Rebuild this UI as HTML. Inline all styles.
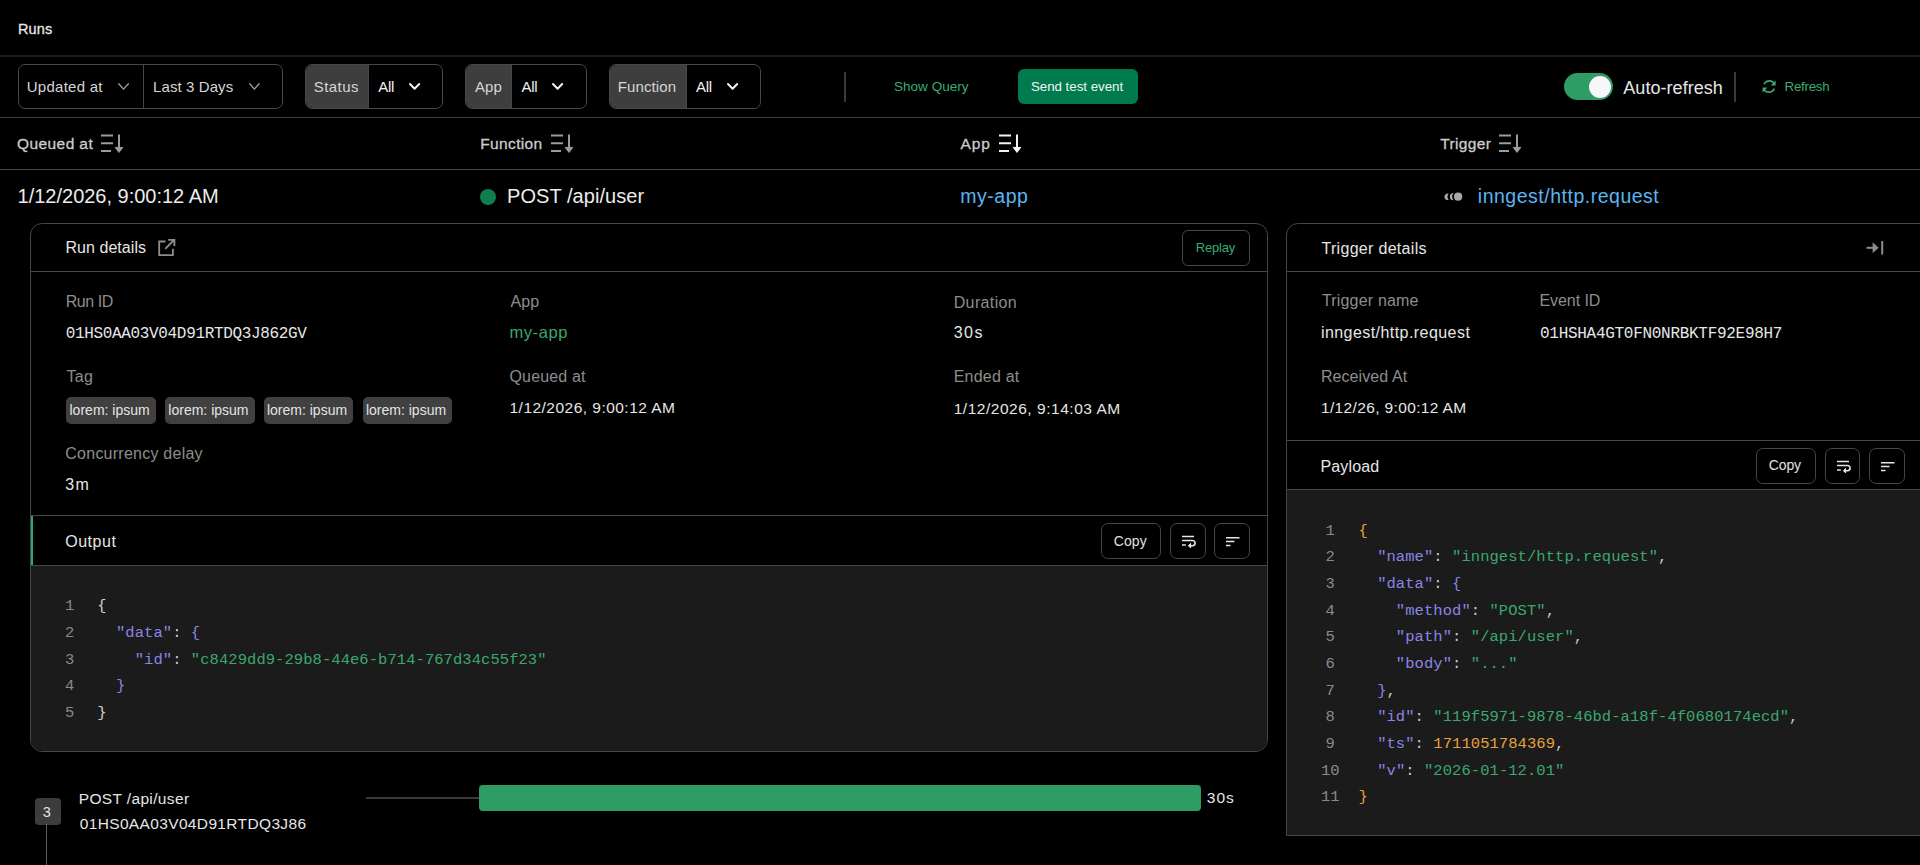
<!DOCTYPE html>
<html><head><meta charset="utf-8"><title>Runs</title>
<style>
html,body{margin:0;padding:0;background:#000;width:1920px;height:865px;overflow:hidden;}
.a{position:absolute;}
.t{position:absolute;white-space:pre;}
.S{font-family:"Liberation Sans",sans-serif;}
.M{font-family:"Liberation Mono",monospace;}
</style></head><body>
<div class="a" style="left:0px;top:55px;width:1920px;height:2px;background:#1d1d1d"></div>
<div class="a" style="left:0px;top:117px;width:1920px;height:1px;background:#404040"></div>
<div class="a" style="left:0px;top:169px;width:1920px;height:1px;background:#464646"></div>
<div class="a" style="left:18px;top:64px;width:265px;height:45px;border:1px solid #474747;border-radius:7px;box-sizing:border-box"></div>
<div class="a" style="left:143px;top:64px;width:1px;height:45px;background:#474747"></div>
<div class="a" style="left:305px;top:64px;width:138px;height:45px;border:1px solid #474747;border-radius:7px;box-sizing:border-box;overflow:hidden"></div>
<div class="a" style="left:306px;top:65px;width:62px;height:43px;background:#3e3e3e;border-radius:6px 0 0 6px"></div>
<div class="a" style="left:368px;top:65px;width:1px;height:43px;background:#474747"></div>
<div class="a" style="left:465px;top:64px;width:122px;height:45px;border:1px solid #474747;border-radius:7px;box-sizing:border-box;overflow:hidden"></div>
<div class="a" style="left:466px;top:65px;width:45px;height:43px;background:#3e3e3e;border-radius:6px 0 0 6px"></div>
<div class="a" style="left:511px;top:65px;width:1px;height:43px;background:#474747"></div>
<div class="a" style="left:609px;top:64px;width:152px;height:45px;border:1px solid #474747;border-radius:7px;box-sizing:border-box;overflow:hidden"></div>
<div class="a" style="left:610px;top:65px;width:76px;height:43px;background:#3e3e3e;border-radius:6px 0 0 6px"></div>
<div class="a" style="left:686px;top:65px;width:1px;height:43px;background:#474747"></div>
<svg class="a" style="left:117.9px;top:83.2px;overflow:visible" width="11.099999999999994" height="6.799999999999997"><polyline points="0.7,0.7 5.549999999999997,6.099999999999997 10.399999999999995,0.7" fill="none" stroke="#9a9a9a" stroke-width="1.4" stroke-linecap="round" stroke-linejoin="round"/></svg>
<svg class="a" style="left:249.3px;top:83.2px;overflow:visible" width="10.800000000000011" height="6.799999999999997"><polyline points="0.7,0.7 5.400000000000006,6.099999999999997 10.100000000000012,0.7" fill="none" stroke="#9a9a9a" stroke-width="1.4" stroke-linecap="round" stroke-linejoin="round"/></svg>
<svg class="a" style="left:408.9px;top:83.2px;overflow:visible" width="11.199999999999989" height="6.700000000000003"><polyline points="1.0,1.0 5.599999999999994,5.700000000000003 10.199999999999989,1.0" fill="none" stroke="#f2f2f2" stroke-width="2" stroke-linecap="round" stroke-linejoin="round"/></svg>
<svg class="a" style="left:552.3px;top:83.2px;overflow:visible" width="11.200000000000045" height="6.700000000000003"><polyline points="1.0,1.0 5.600000000000023,5.700000000000003 10.200000000000045,1.0" fill="none" stroke="#f2f2f2" stroke-width="2" stroke-linecap="round" stroke-linejoin="round"/></svg>
<svg class="a" style="left:726.8px;top:83.2px;overflow:visible" width="11.200000000000045" height="6.700000000000003"><polyline points="1.0,1.0 5.600000000000023,5.700000000000003 10.200000000000045,1.0" fill="none" stroke="#f2f2f2" stroke-width="2" stroke-linecap="round" stroke-linejoin="round"/></svg>
<div class="a" style="left:844px;top:72px;width:2px;height:30px;background:#3a3a3a"></div>
<div class="a" style="left:1734px;top:72px;width:2px;height:30px;background:#3a3a3a"></div>
<div class="a" style="left:1018px;top:69px;width:120px;height:35px;background:#007b4d;border-radius:6px"></div>
<div class="a" style="left:1564px;top:73px;width:49px;height:27px;background:#2e9c64;border-radius:14px"></div>
<div class="a" style="left:1589px;top:76px;width:22px;height:22px;background:#f8f6f8;border-radius:50%"></div>
<svg class="a" style="left:1761px;top:79px" width="17" height="15"><path d="M13.6 5.2A5.8 5.8 0 0 0 3.1 5.2M2.6 9.6A5.8 5.8 0 0 0 13.3 9.6" fill="none" stroke="#39ad71" stroke-width="1.6"/><path d="M14.6 1.6V6.6H9.8Z M1.6 13.6V8.6H6.4Z" fill="#39ad71"/></svg>
<svg class="a" style="left:100px;top:133px" width="26" height="22"><path d="M1 2.5H13M1 10.3H13M1 18.1H11" stroke="#9c9c9c" stroke-width="2" stroke-linecap="butt"/><path d="M19 1.5V17" stroke="#9c9c9c" stroke-width="2"/><path d="M15.2 14.4L19 19.4L22.8 14.4Z" fill="#9c9c9c" stroke="#9c9c9c" stroke-width="1" stroke-linejoin="round"/></svg>
<svg class="a" style="left:550px;top:133px" width="26" height="22"><path d="M1 2.5H13M1 10.3H13M1 18.1H11" stroke="#9c9c9c" stroke-width="2" stroke-linecap="butt"/><path d="M19 1.5V17" stroke="#9c9c9c" stroke-width="2"/><path d="M15.2 14.4L19 19.4L22.8 14.4Z" fill="#9c9c9c" stroke="#9c9c9c" stroke-width="1" stroke-linejoin="round"/></svg>
<svg class="a" style="left:998px;top:133px" width="26" height="22"><path d="M1 2.5H13M1 10.3H13M1 18.1H11" stroke="#f4f4f4" stroke-width="2" stroke-linecap="butt"/><path d="M19 1.5V17" stroke="#f4f4f4" stroke-width="2"/><path d="M15.2 14.4L19 19.4L22.8 14.4Z" fill="#f4f4f4" stroke="#f4f4f4" stroke-width="1" stroke-linejoin="round"/></svg>
<svg class="a" style="left:1498px;top:133px" width="26" height="22"><path d="M1 2.5H13M1 10.3H13M1 18.1H11" stroke="#9c9c9c" stroke-width="2" stroke-linecap="butt"/><path d="M19 1.5V17" stroke="#9c9c9c" stroke-width="2"/><path d="M15.2 14.4L19 19.4L22.8 14.4Z" fill="#9c9c9c" stroke="#9c9c9c" stroke-width="1" stroke-linejoin="round"/></svg>
<div class="a" style="left:480px;top:189px;width:16px;height:16px;background:#0e7f4c;border-radius:50%"></div>
<svg class="a" style="left:1443px;top:191px" width="21" height="12"><circle cx="15.1" cy="5.7" r="4.1" fill="#a8a8a8"/><path d="M10.5 2.1A3.6 3.6 0 1 0 10.5 9.3A6 6 0 0 1 10.5 2.1Z" fill="#adadad"/><path d="M5.7 2.8A3.2 3.2 0 1 0 5.7 8.8A4.6 4.6 0 0 1 5.7 2.8Z" fill="#adadad"/></svg>
<div class="a" style="left:30px;top:223px;width:1238px;height:529px;border:1px solid #454545;border-radius:12px;box-sizing:border-box"></div>
<div class="a" style="left:31px;top:271px;width:1236px;height:1px;background:#454545"></div>
<svg class="a" style="left:157px;top:238px" width="20" height="19"><path d="M8.5 3.5H2.2V17.2H15.9V10.8" fill="none" stroke="#8d8d8d" stroke-width="1.8"/><path d="M8.2 10.8L17 2M11.2 1.8H17.4V8" fill="none" stroke="#8d8d8d" stroke-width="1.8"/></svg>
<div class="a" style="left:1182px;top:230px;width:68px;height:36px;border:1px solid #454545;border-radius:6px;box-sizing:border-box"></div>
<div class="a" style="left:66px;top:397px;width:89.5px;height:26.5px;background:#404040;border-radius:5px"></div>
<div class="a" style="left:165px;top:397px;width:89.5px;height:26.5px;background:#404040;border-radius:5px"></div>
<div class="a" style="left:263.5px;top:397px;width:89.5px;height:26.5px;background:#404040;border-radius:5px"></div>
<div class="a" style="left:362.5px;top:397px;width:89.5px;height:26.5px;background:#404040;border-radius:5px"></div>
<div class="a" style="left:31px;top:515px;width:1236px;height:1px;background:#454545"></div>
<div class="a" style="left:31px;top:516px;width:2px;height:49px;background:#2aa86b"></div>
<div class="a" style="left:31px;top:565px;width:1236px;height:1px;background:#454545"></div>
<div class="a" style="left:31px;top:566px;width:1236px;height:185px;background:#1b1b1b;border-radius:0 0 11px 11px"></div>
<div class="a" style="left:1101px;top:523px;width:60px;height:36px;border:1px solid #454545;border-radius:7px;box-sizing:border-box"></div>
<div class="a" style="left:1170px;top:523px;width:36px;height:36px;border:1px solid #454545;border-radius:7px;box-sizing:border-box"></div>
<div class="a" style="left:1214px;top:523px;width:36px;height:36px;border:1px solid #454545;border-radius:7px;box-sizing:border-box"></div>
<svg class="a" style="left:1181px;top:535px" width="16" height="14"><path d="M1 1.5H13M1 5.5H11.5a2.6 2.6 0 0 1 0 5.2H8.5M1 10H4.8" fill="none" stroke="#e6e6e6" stroke-width="1.6"/><path d="M9.6 8.4L7.4 10.7L9.6 12.9Z" fill="#e6e6e6" stroke="#e6e6e6" stroke-width="1"/></svg>
<svg class="a" style="left:1225px;top:536px" width="16" height="12"><path d="M1 1.8H14.5M1 5.5H9.5M1 9.5H5.5" fill="none" stroke="#e6e6e6" stroke-width="1.6"/></svg>
<div class="a" style="left:1286px;top:223px;width:654px;height:613px;border:1px solid #454545;border-radius:12px 0 0 0;box-sizing:border-box"></div>
<div class="a" style="left:1287px;top:271px;width:633px;height:1px;background:#454545"></div>
<svg class="a" style="left:1865px;top:240px" width="21" height="16"><path d="M1.5 7.8H9" stroke="#8d8d8d" stroke-width="2"/><path d="M7.6 2.3L13.6 7.8L7.6 13.3Z" fill="#8d8d8d"/><path d="M17.2 1V14.6" stroke="#8d8d8d" stroke-width="2"/></svg>
<div class="a" style="left:1287px;top:440px;width:633px;height:1px;background:#454545"></div>
<div class="a" style="left:1287px;top:489px;width:633px;height:1px;background:#454545"></div>
<div class="a" style="left:1287px;top:490px;width:633px;height:345px;background:#1b1b1b"></div>
<div class="a" style="left:1756px;top:448px;width:60px;height:36px;border:1px solid #454545;border-radius:7px;box-sizing:border-box"></div>
<div class="a" style="left:1825px;top:448px;width:35px;height:36px;border:1px solid #454545;border-radius:7px;box-sizing:border-box"></div>
<div class="a" style="left:1869px;top:448px;width:36px;height:36px;border:1px solid #454545;border-radius:7px;box-sizing:border-box"></div>
<svg class="a" style="left:1836px;top:460px" width="16" height="14"><path d="M1 1.5H13M1 5.5H11.5a2.6 2.6 0 0 1 0 5.2H8.5M1 10H4.8" fill="none" stroke="#e6e6e6" stroke-width="1.6"/><path d="M9.6 8.4L7.4 10.7L9.6 12.9Z" fill="#e6e6e6" stroke="#e6e6e6" stroke-width="1"/></svg>
<svg class="a" style="left:1880px;top:461px" width="16" height="12"><path d="M1 1.8H14.5M1 5.5H9.5M1 9.5H5.5" fill="none" stroke="#e6e6e6" stroke-width="1.6"/></svg>
<div class="a" style="left:34.5px;top:798px;width:26.5px;height:26.5px;background:#3c3c3c;border-radius:4px"></div>
<div class="a" style="left:46px;top:824px;width:1px;height:41px;background:#5e5e5e"></div>
<div class="a" style="left:365.5px;top:797px;width:113.5px;height:1.5px;background:#3a3a3a"></div>
<div class="a" style="left:479px;top:784.5px;width:722px;height:26.5px;background:#2d9c63;border-radius:4px"></div>
<div class="t M" style="left:39.8px;width:60px;text-align:center;top:599.30px;font-size:15.5px;line-height:15.5px;letter-spacing:0.06px;color:#8a8a8a">1</div>
<div class="t M" style="left:97.2px;top:599.30px;font-size:15.5px;line-height:15.5px;letter-spacing:0.06px"><span style="color:#d0d0d0">{</span></div>
<div class="t M" style="left:39.8px;width:60px;text-align:center;top:625.97px;font-size:15.5px;line-height:15.5px;letter-spacing:0.06px;color:#8a8a8a">2</div>
<div class="t M" style="left:97.2px;top:625.97px;font-size:15.5px;line-height:15.5px;letter-spacing:0.06px">  <span style="color:#8a84e8">"</span><span style="color:#8a84e8">data</span><span style="color:#8a84e8">"</span><span style="color:#c6c6c6">: </span><span style="color:#8a84e8">{</span></div>
<div class="t M" style="left:39.8px;width:60px;text-align:center;top:652.64px;font-size:15.5px;line-height:15.5px;letter-spacing:0.06px;color:#8a8a8a">3</div>
<div class="t M" style="left:97.2px;top:652.64px;font-size:15.5px;line-height:15.5px;letter-spacing:0.06px">    <span style="color:#8a84e8">"</span><span style="color:#8a84e8">id</span><span style="color:#8a84e8">"</span><span style="color:#c6c6c6">: </span><span style="color:#3aa86e">"c8429dd9-29b8-44e6-b714-767d34c55f23"</span></div>
<div class="t M" style="left:39.8px;width:60px;text-align:center;top:679.31px;font-size:15.5px;line-height:15.5px;letter-spacing:0.06px;color:#8a8a8a">4</div>
<div class="t M" style="left:97.2px;top:679.31px;font-size:15.5px;line-height:15.5px;letter-spacing:0.06px">  <span style="color:#8a84e8">}</span></div>
<div class="t M" style="left:39.8px;width:60px;text-align:center;top:705.98px;font-size:15.5px;line-height:15.5px;letter-spacing:0.06px;color:#8a8a8a">5</div>
<div class="t M" style="left:97.2px;top:705.98px;font-size:15.5px;line-height:15.5px;letter-spacing:0.06px"><span style="color:#d0d0d0">}</span></div>
<div class="t M" style="left:1300.3px;width:60px;text-align:center;top:523.60px;font-size:15.5px;line-height:15.5px;letter-spacing:0.06px;color:#8a8a8a">1</div>
<div class="t M" style="left:1358.4px;top:523.60px;font-size:15.5px;line-height:15.5px;letter-spacing:0.06px"><span style="color:#e6a23c">{</span></div>
<div class="t M" style="left:1300.3px;width:60px;text-align:center;top:550.27px;font-size:15.5px;line-height:15.5px;letter-spacing:0.06px;color:#8a8a8a">2</div>
<div class="t M" style="left:1358.4px;top:550.27px;font-size:15.5px;line-height:15.5px;letter-spacing:0.06px">  <span style="color:#8a84e8">"</span><span style="color:#8a84e8">name</span><span style="color:#8a84e8">"</span><span style="color:#c6c6c6">: </span><span style="color:#3aa86e">"inngest/http.request"</span><span style="color:#c6c6c6">,</span></div>
<div class="t M" style="left:1300.3px;width:60px;text-align:center;top:576.94px;font-size:15.5px;line-height:15.5px;letter-spacing:0.06px;color:#8a8a8a">3</div>
<div class="t M" style="left:1358.4px;top:576.94px;font-size:15.5px;line-height:15.5px;letter-spacing:0.06px">  <span style="color:#8a84e8">"</span><span style="color:#8a84e8">data</span><span style="color:#8a84e8">"</span><span style="color:#c6c6c6">: </span><span style="color:#8a84e8">{</span></div>
<div class="t M" style="left:1300.3px;width:60px;text-align:center;top:603.61px;font-size:15.5px;line-height:15.5px;letter-spacing:0.06px;color:#8a8a8a">4</div>
<div class="t M" style="left:1358.4px;top:603.61px;font-size:15.5px;line-height:15.5px;letter-spacing:0.06px">    <span style="color:#8a84e8">"</span><span style="color:#8a84e8">method</span><span style="color:#8a84e8">"</span><span style="color:#c6c6c6">: </span><span style="color:#3aa86e">"POST"</span><span style="color:#c6c6c6">,</span></div>
<div class="t M" style="left:1300.3px;width:60px;text-align:center;top:630.28px;font-size:15.5px;line-height:15.5px;letter-spacing:0.06px;color:#8a8a8a">5</div>
<div class="t M" style="left:1358.4px;top:630.28px;font-size:15.5px;line-height:15.5px;letter-spacing:0.06px">    <span style="color:#8a84e8">"</span><span style="color:#8a84e8">path</span><span style="color:#8a84e8">"</span><span style="color:#c6c6c6">: </span><span style="color:#3aa86e">"/api/user"</span><span style="color:#c6c6c6">,</span></div>
<div class="t M" style="left:1300.3px;width:60px;text-align:center;top:656.95px;font-size:15.5px;line-height:15.5px;letter-spacing:0.06px;color:#8a8a8a">6</div>
<div class="t M" style="left:1358.4px;top:656.95px;font-size:15.5px;line-height:15.5px;letter-spacing:0.06px">    <span style="color:#8a84e8">"</span><span style="color:#8a84e8">body</span><span style="color:#8a84e8">"</span><span style="color:#c6c6c6">: </span><span style="color:#3aa86e">"..."</span></div>
<div class="t M" style="left:1300.3px;width:60px;text-align:center;top:683.62px;font-size:15.5px;line-height:15.5px;letter-spacing:0.06px;color:#8a8a8a">7</div>
<div class="t M" style="left:1358.4px;top:683.62px;font-size:15.5px;line-height:15.5px;letter-spacing:0.06px">  <span style="color:#8a84e8">}</span><span style="color:#c6c6c6">,</span></div>
<div class="t M" style="left:1300.3px;width:60px;text-align:center;top:710.29px;font-size:15.5px;line-height:15.5px;letter-spacing:0.06px;color:#8a8a8a">8</div>
<div class="t M" style="left:1358.4px;top:710.29px;font-size:15.5px;line-height:15.5px;letter-spacing:0.06px">  <span style="color:#8a84e8">"</span><span style="color:#8a84e8">id</span><span style="color:#8a84e8">"</span><span style="color:#c6c6c6">: </span><span style="color:#3aa86e">"119f5971-9878-46bd-a18f-4f0680174ecd"</span><span style="color:#c6c6c6">,</span></div>
<div class="t M" style="left:1300.3px;width:60px;text-align:center;top:736.96px;font-size:15.5px;line-height:15.5px;letter-spacing:0.06px;color:#8a8a8a">9</div>
<div class="t M" style="left:1358.4px;top:736.96px;font-size:15.5px;line-height:15.5px;letter-spacing:0.06px">  <span style="color:#8a84e8">"</span><span style="color:#8a84e8">ts</span><span style="color:#8a84e8">"</span><span style="color:#c6c6c6">: </span><span style="color:#e6a23c">1711051784369</span><span style="color:#c6c6c6">,</span></div>
<div class="t M" style="left:1300.3px;width:60px;text-align:center;top:763.63px;font-size:15.5px;line-height:15.5px;letter-spacing:0.06px;color:#8a8a8a">10</div>
<div class="t M" style="left:1358.4px;top:763.63px;font-size:15.5px;line-height:15.5px;letter-spacing:0.06px">  <span style="color:#8a84e8">"</span><span style="color:#8a84e8">v</span><span style="color:#8a84e8">"</span><span style="color:#c6c6c6">: </span><span style="color:#3aa86e">"2026-01-12.01"</span></div>
<div class="t M" style="left:1300.3px;width:60px;text-align:center;top:790.30px;font-size:15.5px;line-height:15.5px;letter-spacing:0.06px;color:#8a8a8a">11</div>
<div class="t M" style="left:1358.4px;top:790.30px;font-size:15.5px;line-height:15.5px;letter-spacing:0.06px"><span style="color:#e6a23c">}</span></div>
<div class="t S" style="left:17.90px;top:21.50px;font-size:14.5px;line-height:14.5px;letter-spacing:0.133px;color:#e6e6e6;-webkit-text-stroke:0.3px #e6e6e6">Runs</div>
<div class="t S" style="left:26.80px;top:79.30px;font-size:15.0px;line-height:15.0px;letter-spacing:0.244px;color:#d6d6d6">Updated at</div>
<div class="t S" style="left:153.10px;top:79.20px;font-size:15.0px;line-height:15.0px;letter-spacing:0.090px;color:#d6d6d6">Last 3 Days</div>
<div class="t S" style="left:313.80px;top:78.90px;font-size:15.0px;line-height:15.0px;letter-spacing:0.420px;color:#d6d6d6">Status</div>
<div class="t S" style="left:378.30px;top:78.90px;font-size:15.0px;line-height:15.0px;letter-spacing:-0.350px;color:#f2f2f2">All</div>
<div class="t S" style="left:475.00px;top:79.10px;font-size:15.0px;line-height:15.0px;letter-spacing:0.100px;color:#d6d6d6">App</div>
<div class="t S" style="left:521.60px;top:79.10px;font-size:15.0px;line-height:15.0px;letter-spacing:-0.300px;color:#f2f2f2">All</div>
<div class="t S" style="left:617.70px;top:79.10px;font-size:15.0px;line-height:15.0px;letter-spacing:0.129px;color:#d6d6d6">Function</div>
<div class="t S" style="left:696.10px;top:79.10px;font-size:15.0px;line-height:15.0px;letter-spacing:-0.400px;color:#f2f2f2">All</div>
<div class="t S" style="left:893.90px;top:79.90px;font-size:13.5px;line-height:13.5px;letter-spacing:0.044px;color:#39ad71">Show Query</div>
<div class="t S" style="left:1030.90px;top:79.90px;font-size:13.3px;line-height:13.3px;letter-spacing:-0.007px;color:#f4f4f4">Send test event</div>
<div class="t S" style="left:1623.30px;top:78.50px;font-size:18.0px;line-height:18.0px;letter-spacing:0.045px;color:#e6e6e6">Auto-refresh</div>
<div class="t S" style="left:1784.60px;top:80.00px;font-size:13.3px;line-height:13.3px;letter-spacing:-0.267px;color:#39ad71">Refresh</div>
<div class="t S" style="left:17.10px;top:135.70px;font-size:15.5px;line-height:15.5px;letter-spacing:0.400px;color:#cccccc;-webkit-text-stroke:0.3px #cccccc">Queued at</div>
<div class="t S" style="left:480.20px;top:135.70px;font-size:15.5px;line-height:15.5px;letter-spacing:0.371px;color:#cccccc;-webkit-text-stroke:0.3px #cccccc">Function</div>
<div class="t S" style="left:960.50px;top:135.70px;font-size:15.5px;line-height:15.5px;letter-spacing:0.900px;color:#cccccc;-webkit-text-stroke:0.3px #cccccc">App</div>
<div class="t S" style="left:1440.20px;top:135.70px;font-size:15.5px;line-height:15.5px;letter-spacing:0.350px;color:#cccccc;-webkit-text-stroke:0.3px #cccccc">Trigger</div>
<div class="t S" style="left:17.60px;top:186.10px;font-size:20.0px;line-height:20.0px;letter-spacing:-0.010px;color:#ececec">1/12/2026, 9:00:12 AM</div>
<div class="t S" style="left:507.10px;top:186.20px;font-size:20.0px;line-height:20.0px;letter-spacing:0.054px;color:#ececec">POST /api/user</div>
<div class="t S" style="left:960.20px;top:187.40px;font-size:19.5px;line-height:19.5px;letter-spacing:0.540px;color:#5bb5f2">my-app</div>
<div class="t S" style="left:1477.80px;top:187.00px;font-size:19.5px;line-height:19.5px;letter-spacing:0.511px;color:#5bb5f2">inngest/http.request</div>
<div class="t S" style="left:65.40px;top:240.40px;font-size:16.0px;line-height:16.0px;letter-spacing:0.060px;color:#e6e6e6">Run details</div>
<div class="t S" style="left:1195.70px;top:240.90px;font-size:13.0px;line-height:13.0px;letter-spacing:-0.160px;color:#39ad71">Replay</div>
<div class="t S" style="left:65.70px;top:293.90px;font-size:16.0px;line-height:16.0px;letter-spacing:-0.420px;color:#8d8d8d">Run ID</div>
<div class="t M" style="left:65.70px;top:325.50px;font-size:16.0px;line-height:16.0px;letter-spacing:-0.336px;color:#e6e6e6">01HS0AA03V04D91RTDQ3J862GV</div>
<div class="t S" style="left:510.50px;top:293.80px;font-size:16.0px;line-height:16.0px;letter-spacing:0.150px;color:#8d8d8d">App</div>
<div class="t S" style="left:509.50px;top:323.60px;font-size:16.5px;line-height:16.5px;letter-spacing:0.560px;color:#3aa86e">my-app</div>
<div class="t S" style="left:953.70px;top:294.50px;font-size:16.0px;line-height:16.0px;letter-spacing:0.371px;color:#8d8d8d">Duration</div>
<div class="t S" style="left:953.70px;top:325.30px;font-size:16.0px;line-height:16.0px;letter-spacing:1.450px;color:#e6e6e6">30s</div>
<div class="t S" style="left:66.50px;top:369.40px;font-size:16.0px;line-height:16.0px;letter-spacing:0.350px;color:#8d8d8d">Tag</div>
<div class="t S" style="left:509.50px;top:369.10px;font-size:16.0px;line-height:16.0px;letter-spacing:0.162px;color:#8d8d8d">Queued at</div>
<div class="t S" style="left:953.70px;top:369.10px;font-size:16.0px;line-height:16.0px;letter-spacing:0.214px;color:#8d8d8d">Ended at</div>
<div class="t S" style="left:69.50px;top:402.80px;font-size:14.0px;line-height:14.0px;letter-spacing:0.009px;color:#e4e4e4">lorem: ipsum</div>
<div class="t S" style="left:168.30px;top:402.80px;font-size:14.0px;line-height:14.0px;letter-spacing:0.009px;color:#e4e4e4">lorem: ipsum</div>
<div class="t S" style="left:266.90px;top:402.80px;font-size:14.0px;line-height:14.0px;letter-spacing:0.009px;color:#e4e4e4">lorem: ipsum</div>
<div class="t S" style="left:365.90px;top:402.80px;font-size:14.0px;line-height:14.0px;letter-spacing:0.009px;color:#e4e4e4">lorem: ipsum</div>
<div class="t S" style="left:509.50px;top:400.20px;font-size:15.5px;line-height:15.5px;letter-spacing:0.475px;color:#e6e6e6">1/12/2026, 9:00:12 AM</div>
<div class="t S" style="left:953.70px;top:401.30px;font-size:15.5px;line-height:15.5px;letter-spacing:0.525px;color:#e6e6e6">1/12/2026, 9:14:03 AM</div>
<div class="t S" style="left:65.30px;top:446.10px;font-size:16.0px;line-height:16.0px;letter-spacing:0.244px;color:#8d8d8d">Concurrency delay</div>
<div class="t S" style="left:65.30px;top:476.60px;font-size:16.0px;line-height:16.0px;letter-spacing:1.200px;color:#e6e6e6">3m</div>
<div class="t S" style="left:65.20px;top:534.10px;font-size:16.0px;line-height:16.0px;letter-spacing:0.540px;color:#e6e6e6">Output</div>
<div class="t S" style="left:1113.80px;top:533.60px;font-size:14.0px;line-height:14.0px;letter-spacing:0.067px;color:#e0e0e0">Copy</div>
<div class="t S" style="left:42.75px;top:804.60px;font-size:14.5px;line-height:14.5px;letter-spacing:0.000px;color:#e6e6e6">3</div>
<div class="t S" style="left:78.70px;top:791.10px;font-size:15.5px;line-height:15.5px;letter-spacing:0.362px;color:#e6e6e6">POST /api/user</div>
<div class="t S" style="left:79.70px;top:815.60px;font-size:15.5px;line-height:15.5px;letter-spacing:0.355px;color:#e6e6e6">01HS0AA03V04D91RTDQ3J86</div>
<div class="t S" style="left:1206.80px;top:790.20px;font-size:15.5px;line-height:15.5px;letter-spacing:1.000px;color:#e6e6e6">30s</div>
<div class="t S" style="left:1321.50px;top:241.00px;font-size:16.0px;line-height:16.0px;letter-spacing:0.300px;color:#e6e6e6">Trigger details</div>
<div class="t S" style="left:1321.90px;top:293.40px;font-size:16.0px;line-height:16.0px;letter-spacing:0.182px;color:#8d8d8d">Trigger name</div>
<div class="t S" style="left:1539.40px;top:293.40px;font-size:16.0px;line-height:16.0px;letter-spacing:-0.057px;color:#8d8d8d">Event ID</div>
<div class="t S" style="left:1320.90px;top:324.60px;font-size:16.0px;line-height:16.0px;letter-spacing:0.442px;color:#e6e6e6">inngest/http.request</div>
<div class="t M" style="left:1540.00px;top:325.50px;font-size:16.0px;line-height:16.0px;letter-spacing:-0.288px;color:#e6e6e6">01HSHA4GT0FN0NRBKTF92E98H7</div>
<div class="t S" style="left:1320.90px;top:369.10px;font-size:16.0px;line-height:16.0px;letter-spacing:0.080px;color:#8d8d8d">Received At</div>
<div class="t S" style="left:1320.90px;top:400.40px;font-size:15.5px;line-height:15.5px;letter-spacing:0.367px;color:#e6e6e6">1/12/26, 9:00:12 AM</div>
<div class="t S" style="left:1320.50px;top:458.70px;font-size:16.0px;line-height:16.0px;letter-spacing:0.133px;color:#e6e6e6">Payload</div>
<div class="t S" style="left:1768.80px;top:458.10px;font-size:14.0px;line-height:14.0px;letter-spacing:-0.133px;color:#e0e0e0">Copy</div>
</body></html>
